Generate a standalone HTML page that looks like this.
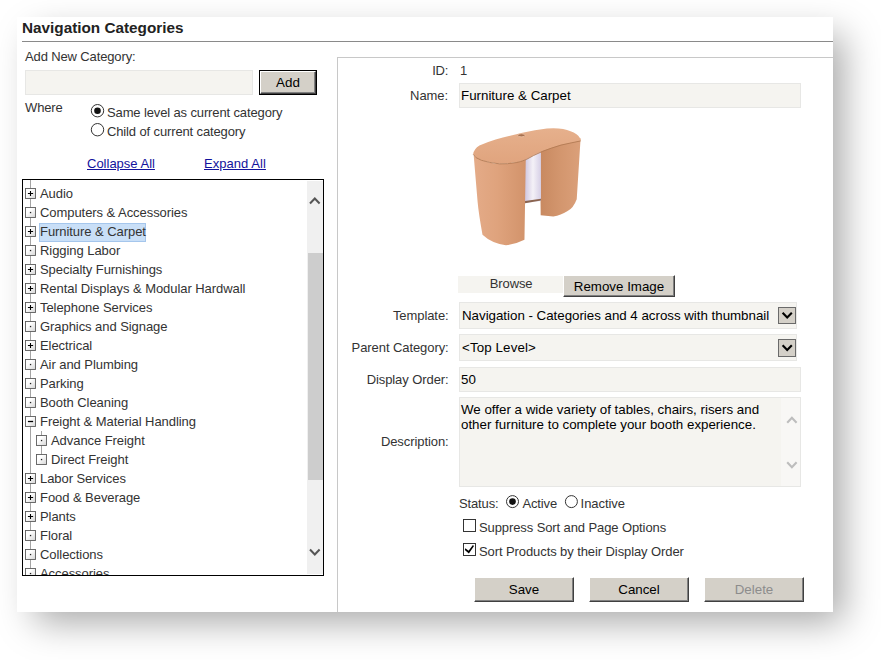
<!DOCTYPE html>
<html><head><meta charset="utf-8">
<style>
html,body{margin:0;padding:0;background:#fff;}
body{width:881px;height:660px;position:relative;overflow:hidden;font-family:"Liberation Sans",sans-serif;font-size:13px;color:#333;}
.abs{position:absolute;white-space:nowrap;box-sizing:border-box;}
#card{position:absolute;left:17px;top:16.5px;width:816px;height:595.5px;background:#fff;box-shadow:14px 14px 35px -4px rgba(0,0,0,0.35);}
#clip{position:absolute;left:0;top:0;width:833px;height:612px;overflow:hidden;}
.t{position:absolute;white-space:nowrap;line-height:16px;height:16px;letter-spacing:-0.13px;}
.lab{position:absolute;white-space:nowrap;line-height:16px;height:16px;font-size:13px;letter-spacing:-0.08px;text-align:right;width:120px;left:328.6px;}
.inp{position:absolute;box-sizing:border-box;background:#f5f4f0;border:1px solid #e7e7e5;color:#000;font-size:13.33px;}
.btn{position:absolute;box-sizing:border-box;background:#d4d0c8;border:1px solid;border-color:#fff #404040 #404040 #fff;box-shadow:inset -1px -1px 0 #808080;text-align:center;color:#000;font-size:13.33px;}
.v{position:absolute;white-space:nowrap;color:#000;font-size:13.33px;line-height:16px;height:16px;}
</style></head><body>
<div id="card"></div>
<div id="clip">
<div class="t" style="left:22px;top:19px;font-weight:bold;font-size:15.3px;color:#222;line-height:18px;height:18px;letter-spacing:0;">Navigation Categories</div>
<div class="abs" style="left:22px;top:41px;width:820px;height:1px;background:#8a8a8a;"></div>
<div class="t" style="left:25px;top:49px;">Add New Category:</div>
<div class="inp" style="left:25px;top:70px;width:228px;height:25px;"></div>
<div class="abs" style="left:259px;top:70px;width:58px;height:25px;background:#000;"></div>
<div class="btn" style="left:260px;top:71px;width:56px;height:23px;line-height:22px;font-size:13.4px;">Add</div>
<div class="t" style="left:25px;top:100px;">Where</div>
<div class="t" style="left:107px;top:105px;">Same level as current category</div>
<div class="t" style="left:107px;top:124px;">Child of current category</div>
<svg class="abs" style="left:90px;top:103px;" width="15" height="15" viewBox="0 0 15 15"><circle cx="7.5" cy="7.7" r="6.2" fill="#fff" stroke="#333" stroke-width="1"/><circle cx="7.5" cy="7.7" r="3.3" fill="#111"/></svg>
<svg class="abs" style="left:90px;top:122px;" width="15" height="15" viewBox="0 0 15 15"><circle cx="7.5" cy="7.7" r="6.2" fill="#fff" stroke="#333" stroke-width="1"/></svg>
<div class="t" style="left:87px;top:156px;color:#12129c;text-decoration:underline;letter-spacing:0;">Collapse All</div>
<div class="t" style="left:204px;top:156px;color:#12129c;text-decoration:underline;letter-spacing:0.05px;">Expand All</div>

<svg width="0" height="0" style="position:absolute"><defs><linearGradient id="ig" x1="0" y1="0" x2="1" y2="1"><stop offset="0.35" stop-color="#fff"/><stop offset="1" stop-color="#d4d4d4"/></linearGradient></defs></svg>
<!-- tree -->
<div class="abs" style="left:22px;top:179px;width:302px;height:397px;border:1px solid #000;background:#fff;"></div>
<div class="abs" style="left:0;top:180px;width:323px;height:395px;overflow:hidden;">
<div class="abs" style="left:0;top:-180px;width:323px;height:600px;">
<div class="abs" style="left:30px;top:180px;width:1px;height:400px;background:#a4a4a4;"></div>
<div class="abs" style="left:41px;top:431px;width:1px;height:29px;background:#a4a4a4;"></div>
<svg class="abs" style="left:25px;top:188px" width="11" height="11" viewBox="0 0 11 11"><rect x="0.5" y="0.5" width="10" height="10" fill="url(#ig)" stroke="#5c5c5c" stroke-width="0.9"/><path d="M2.9 5.5H8.1M5.5 2.9V8.1" stroke="#000" stroke-width="1.1"/></svg>
<div class="t tr" style="letter-spacing:-0.06px;left:40px;top:186px;">Audio</div>
<svg class="abs" style="left:25px;top:207px" width="11" height="11" viewBox="0 0 11 11"><rect x="0.5" y="0.5" width="10" height="10" fill="url(#ig)" stroke="#5c5c5c" stroke-width="0.9"/><rect x="4.9" y="4.9" width="1.3" height="1.3" fill="#222"/></svg>
<div class="t tr" style="letter-spacing:-0.06px;left:40px;top:205px;">Computers &amp; Accessories</div>
<svg class="abs" style="left:25px;top:226px" width="11" height="11" viewBox="0 0 11 11"><rect x="0.5" y="0.5" width="10" height="10" fill="url(#ig)" stroke="#5c5c5c" stroke-width="0.9"/><path d="M2.9 5.5H8.1M5.5 2.9V8.1" stroke="#000" stroke-width="1.1"/></svg>
<div class="abs" style="left:39px;top:223px;width:107px;height:19px;background:#c9dff7;border:1px solid #a5c6ec;"></div>
<div class="t tr" style="letter-spacing:-0.06px;left:40px;top:224px;">Furniture &amp; Carpet</div>
<svg class="abs" style="left:25px;top:245px" width="11" height="11" viewBox="0 0 11 11"><rect x="0.5" y="0.5" width="10" height="10" fill="url(#ig)" stroke="#5c5c5c" stroke-width="0.9"/><rect x="4.9" y="4.9" width="1.3" height="1.3" fill="#222"/></svg>
<div class="t tr" style="letter-spacing:-0.06px;left:40px;top:243px;">Rigging Labor</div>
<svg class="abs" style="left:25px;top:264px" width="11" height="11" viewBox="0 0 11 11"><rect x="0.5" y="0.5" width="10" height="10" fill="url(#ig)" stroke="#5c5c5c" stroke-width="0.9"/><path d="M2.9 5.5H8.1M5.5 2.9V8.1" stroke="#000" stroke-width="1.1"/></svg>
<div class="t tr" style="letter-spacing:-0.06px;left:40px;top:262px;">Specialty Furnishings</div>
<svg class="abs" style="left:25px;top:283px" width="11" height="11" viewBox="0 0 11 11"><rect x="0.5" y="0.5" width="10" height="10" fill="url(#ig)" stroke="#5c5c5c" stroke-width="0.9"/><path d="M2.9 5.5H8.1M5.5 2.9V8.1" stroke="#000" stroke-width="1.1"/></svg>
<div class="t tr" style="letter-spacing:-0.06px;left:40px;top:281px;">Rental Displays &amp; Modular Hardwall</div>
<svg class="abs" style="left:25px;top:302px" width="11" height="11" viewBox="0 0 11 11"><rect x="0.5" y="0.5" width="10" height="10" fill="url(#ig)" stroke="#5c5c5c" stroke-width="0.9"/><path d="M2.9 5.5H8.1M5.5 2.9V8.1" stroke="#000" stroke-width="1.1"/></svg>
<div class="t tr" style="letter-spacing:-0.06px;left:40px;top:300px;">Telephone Services</div>
<svg class="abs" style="left:25px;top:321px" width="11" height="11" viewBox="0 0 11 11"><rect x="0.5" y="0.5" width="10" height="10" fill="url(#ig)" stroke="#5c5c5c" stroke-width="0.9"/><rect x="4.9" y="4.9" width="1.3" height="1.3" fill="#222"/></svg>
<div class="t tr" style="letter-spacing:-0.06px;left:40px;top:319px;">Graphics and Signage</div>
<svg class="abs" style="left:25px;top:340px" width="11" height="11" viewBox="0 0 11 11"><rect x="0.5" y="0.5" width="10" height="10" fill="url(#ig)" stroke="#5c5c5c" stroke-width="0.9"/><path d="M2.9 5.5H8.1M5.5 2.9V8.1" stroke="#000" stroke-width="1.1"/></svg>
<div class="t tr" style="letter-spacing:-0.06px;left:40px;top:338px;">Electrical</div>
<svg class="abs" style="left:25px;top:359px" width="11" height="11" viewBox="0 0 11 11"><rect x="0.5" y="0.5" width="10" height="10" fill="url(#ig)" stroke="#5c5c5c" stroke-width="0.9"/><rect x="4.9" y="4.9" width="1.3" height="1.3" fill="#222"/></svg>
<div class="t tr" style="letter-spacing:-0.06px;left:40px;top:357px;">Air and Plumbing</div>
<svg class="abs" style="left:25px;top:378px" width="11" height="11" viewBox="0 0 11 11"><rect x="0.5" y="0.5" width="10" height="10" fill="url(#ig)" stroke="#5c5c5c" stroke-width="0.9"/><rect x="4.9" y="4.9" width="1.3" height="1.3" fill="#222"/></svg>
<div class="t tr" style="letter-spacing:-0.06px;left:40px;top:376px;">Parking</div>
<svg class="abs" style="left:25px;top:397px" width="11" height="11" viewBox="0 0 11 11"><rect x="0.5" y="0.5" width="10" height="10" fill="url(#ig)" stroke="#5c5c5c" stroke-width="0.9"/><rect x="4.9" y="4.9" width="1.3" height="1.3" fill="#222"/></svg>
<div class="t tr" style="letter-spacing:-0.06px;left:40px;top:395px;">Booth Cleaning</div>
<svg class="abs" style="left:25px;top:416px" width="11" height="11" viewBox="0 0 11 11"><rect x="0.5" y="0.5" width="10" height="10" fill="url(#ig)" stroke="#5c5c5c" stroke-width="0.9"/><path d="M2.9 5.5H8.1" stroke="#000" stroke-width="1.3"/></svg>
<div class="t tr" style="letter-spacing:-0.06px;left:40px;top:414px;">Freight &amp; Material Handling</div>
<svg class="abs" style="left:36px;top:435px" width="11" height="11" viewBox="0 0 11 11"><rect x="0.5" y="0.5" width="10" height="10" fill="url(#ig)" stroke="#5c5c5c" stroke-width="0.9"/><rect x="4.9" y="4.9" width="1.3" height="1.3" fill="#222"/></svg>
<div class="t tr" style="letter-spacing:-0.06px;left:51px;top:433px;">Advance Freight</div>
<svg class="abs" style="left:36px;top:454px" width="11" height="11" viewBox="0 0 11 11"><rect x="0.5" y="0.5" width="10" height="10" fill="url(#ig)" stroke="#5c5c5c" stroke-width="0.9"/><rect x="4.9" y="4.9" width="1.3" height="1.3" fill="#222"/></svg>
<div class="t tr" style="letter-spacing:-0.06px;left:51px;top:452px;">Direct Freight</div>
<svg class="abs" style="left:25px;top:473px" width="11" height="11" viewBox="0 0 11 11"><rect x="0.5" y="0.5" width="10" height="10" fill="url(#ig)" stroke="#5c5c5c" stroke-width="0.9"/><path d="M2.9 5.5H8.1M5.5 2.9V8.1" stroke="#000" stroke-width="1.1"/></svg>
<div class="t tr" style="letter-spacing:-0.06px;left:40px;top:471px;">Labor Services</div>
<svg class="abs" style="left:25px;top:492px" width="11" height="11" viewBox="0 0 11 11"><rect x="0.5" y="0.5" width="10" height="10" fill="url(#ig)" stroke="#5c5c5c" stroke-width="0.9"/><path d="M2.9 5.5H8.1M5.5 2.9V8.1" stroke="#000" stroke-width="1.1"/></svg>
<div class="t tr" style="letter-spacing:-0.06px;left:40px;top:490px;">Food &amp; Beverage</div>
<svg class="abs" style="left:25px;top:511px" width="11" height="11" viewBox="0 0 11 11"><rect x="0.5" y="0.5" width="10" height="10" fill="url(#ig)" stroke="#5c5c5c" stroke-width="0.9"/><path d="M2.9 5.5H8.1M5.5 2.9V8.1" stroke="#000" stroke-width="1.1"/></svg>
<div class="t tr" style="letter-spacing:-0.06px;left:40px;top:509px;">Plants</div>
<svg class="abs" style="left:25px;top:530px" width="11" height="11" viewBox="0 0 11 11"><rect x="0.5" y="0.5" width="10" height="10" fill="url(#ig)" stroke="#5c5c5c" stroke-width="0.9"/><rect x="4.9" y="4.9" width="1.3" height="1.3" fill="#222"/></svg>
<div class="t tr" style="letter-spacing:-0.06px;left:40px;top:528px;">Floral</div>
<svg class="abs" style="left:25px;top:549px" width="11" height="11" viewBox="0 0 11 11"><rect x="0.5" y="0.5" width="10" height="10" fill="url(#ig)" stroke="#5c5c5c" stroke-width="0.9"/><rect x="4.9" y="4.9" width="1.3" height="1.3" fill="#222"/></svg>
<div class="t tr" style="letter-spacing:-0.06px;left:40px;top:547px;">Collections</div>
<svg class="abs" style="left:25px;top:568px" width="11" height="11" viewBox="0 0 11 11"><rect x="0.5" y="0.5" width="10" height="10" fill="url(#ig)" stroke="#5c5c5c" stroke-width="0.9"/><rect x="4.9" y="4.9" width="1.3" height="1.3" fill="#222"/></svg>
<div class="t tr" style="letter-spacing:-0.06px;left:40px;top:566px;">Accessories</div>
</div></div>
<!-- scrollbar -->
<div class="abs" style="left:307px;top:181px;width:16px;height:393px;background:#f0f0f0;"></div>
<div class="abs" style="left:308px;top:253px;width:15px;height:227px;background:#cdcdcd;"></div>
<svg class="abs" style="left:307px;top:181px" width="16" height="40" viewBox="0 0 16 40"><path d="M3 22.5L7.8 17.5L12.6 22.5" fill="none" stroke="#555" stroke-width="2"/></svg>
<svg class="abs" style="left:307px;top:534px" width="16" height="40" viewBox="0 0 16 40"><path d="M3 15.5L7.8 20.5L12.6 15.5" fill="none" stroke="#555" stroke-width="2"/></svg>

<!-- right panel -->
<div class="abs" style="left:337px;top:57px;width:520px;height:600px;border:1px solid #c8c8c8;"></div>
<div class="lab" style="top:62.8px;left:328px;letter-spacing:-0.25px">ID:</div>
<div class="v" style="left:460px;top:63px;font-size:13px;color:#333">1</div>
<div class="lab" style="top:88px;left:328px;">Name:</div>
<div class="inp" style="left:459px;top:83px;width:342px;height:25px;"></div>
<div class="v" style="left:461px;top:87.6px;">Furniture &amp; Carpet</div>

<div class="abs" style="left:458px;top:276px;width:105px;height:17px;background:#f5f4f0;"></div>
<div class="t" style="left:458.6px;top:275.6px;width:105px;text-align:center;">Browse</div>
<div class="btn" style="left:563px;top:275px;width:112px;height:22px;line-height:21px;">Remove Image</div>

<div class="lab" style="top:308px;">Template:</div>
<div class="inp" style="left:459px;top:302px;width:338px;height:27px;"></div>
<div class="v" style="left:462px;top:307.6px;letter-spacing:-0.02px">Navigation - Categories and 4 across with thumbnail</div>
<div class="lab" style="top:339.7px;">Parent Category:</div>
<div class="inp" style="left:459px;top:334px;width:338px;height:27px;"></div>
<div class="v" style="left:462px;top:339.6px;letter-spacing:0.12px">&lt;Top Level&gt;</div>
<div class="lab" style="top:371.5px;">Display Order:</div>
<div class="inp" style="left:459px;top:367px;width:342px;height:25px;"></div>
<div class="v" style="left:461px;top:372px;">50</div>
<div class="lab" style="top:434px;">Description:</div>
<div class="inp" style="left:459px;top:397px;width:342px;height:90px;"></div>
<div class="v" style="left:461px;top:402px;line-height:15px;height:auto;white-space:normal;width:320px;">We offer a wide variety of tables, chairs, risers and<br>other furniture to complete your booth experience.</div>


<!-- select arrows -->
<svg class="abs" style="left:778px;top:307px" width="18" height="17" viewBox="0 0 18 17"><rect x="0.5" y="0.5" width="17" height="16" fill="#d4d0c8" stroke="#6a6a6a"/><path d="M4.6 5.8L9.2 10.6L13.8 5.8" fill="none" stroke="#000" stroke-width="2.1"/></svg>
<svg class="abs" style="left:778px;top:339px" width="18" height="18" viewBox="0 0 18 18"><rect x="0.5" y="0.5" width="17" height="17" fill="#d4d0c8" stroke="#6a6a6a"/><path d="M4.6 6.3L9.2 11.1L13.8 6.3" fill="none" stroke="#000" stroke-width="2.1"/></svg>
<!-- textarea scrollbar -->
<div class="abs" style="left:781px;top:398px;width:19px;height:88px;background:#f8f7f5;"></div>
<svg class="abs" style="left:781px;top:398px" width="19" height="88" viewBox="0 0 19 88"><path d="M6.2 24.8L10.9 19.8L15.6 24.8" fill="none" stroke="#bdbdbd" stroke-width="2.1"/><path d="M6.2 64.2L10.9 69.2L15.6 64.2" fill="none" stroke="#bdbdbd" stroke-width="2.1"/></svg>
<!-- radios / checkboxes -->
<svg class="abs" style="left:505px;top:494px;" width="15" height="15" viewBox="0 0 15 15"><circle cx="7.5" cy="7.6" r="6" fill="#fff" stroke="#333" stroke-width="1"/><circle cx="7.5" cy="7.6" r="3.3" fill="#111"/></svg>
<svg class="abs" style="left:564px;top:494px;" width="15" height="15" viewBox="0 0 15 15"><circle cx="7.4" cy="7.6" r="6" fill="#fff" stroke="#333" stroke-width="1"/></svg>
<svg class="abs" style="left:463px;top:519px;" width="13" height="13" viewBox="0 0 13 13"><rect x="0.5" y="0.5" width="12" height="12" fill="#fff" stroke="#2a2a2a" stroke-width="0.95"/></svg>
<svg class="abs" style="left:463px;top:543px;" width="13" height="13" viewBox="0 0 13 13"><rect x="0.5" y="0.5" width="12" height="12" fill="#fff" stroke="#2a2a2a" stroke-width="0.95"/><path d="M2.3 5.3L5.6 7.7L9.9 2L11 2.9L5.9 10.5L1.8 7.1Z" fill="#000"/></svg>
<!-- product image -->
<svg class="abs" style="left:440px;top:100px" width="180" height="170" viewBox="0 0 699 660">
<defs>
<linearGradient id="g1" x1="0" x2="1" y1="0" y2="0"><stop offset="0" stop-color="#e4ab88"/><stop offset="0.45" stop-color="#dfa37d"/><stop offset="1" stop-color="#d2936b"/></linearGradient>
<linearGradient id="g2" x1="0" x2="1" y1="0" y2="0"><stop offset="0" stop-color="#c88960"/><stop offset="0.5" stop-color="#d3966e"/><stop offset="1" stop-color="#dba07a"/></linearGradient>
<linearGradient id="g3" x1="0" x2="1" y1="0" y2="0"><stop offset="0" stop-color="#cfc6e0"/><stop offset="0.5" stop-color="#f4f1f7"/><stop offset="1" stop-color="#d6cfe6"/></linearGradient>
<linearGradient id="g4" x1="0" x2="0" y1="0" y2="1"><stop offset="0" stop-color="#e6b08c"/><stop offset="1" stop-color="#e0a47e"/></linearGradient>
</defs>
<!-- back/right leg -->
<path d="M388 185 L546 148 L531 385 Q518 420 494 432 Q470 448 440 452 L391 447 Z" fill="url(#g2)"/>
<!-- inner panel -->
<path d="M330 225 L392 195 L392 392 L330 400 Z" fill="url(#g3)"/>
<path d="M330 392 L392 383 L392 390 L330 401 Z" fill="#8a6450"/>
<!-- left/front leg -->
<path d="M131 216 Q180 248 240 248 Q290 246 333 232 L328 543 Q295 560 256 564 Q200 556 165 523 Q150 440 146 395 Z" fill="url(#g1)"/>
<!-- top -->
<path d="M129 210 Q132 190 153 177 Q185 162 216 153 Q270 138 320 127 Q370 116 415 111 Q450 108 478 113 Q510 120 530 133 Q546 145 546 158 Q510 165 470 174 Q430 186 399 198 Q360 215 335 230 Q310 240 296 242 Q260 248 232 247 Q190 243 161 233 Q135 224 129 210 Z" fill="url(#g4)"/>
<path d="M129 211 Q135 225 161 234 Q190 244 232 248 Q260 249 296 243 Q310 241 335 231 Q360 216 399 199 Q430 187 470 175 Q510 166 546 159" fill="none" stroke="#b27a54" stroke-width="3.5"/>
<ellipse cx="316" cy="137" rx="14" ry="6" fill="#a8714f" stroke="#eec6aa" stroke-width="3"/>
</svg>
<div class="t" style="left:459px;top:496px;">Status:</div>
<div class="t" style="left:522.4px;top:496px;">Active</div>
<div class="t" style="left:580.6px;top:496px;letter-spacing:-0.05px">Inactive</div>
<div class="t" style="left:479px;top:519.7px;letter-spacing:-0.1px">Suppress Sort and Page Options</div>
<div class="t" style="left:479px;top:543.6px;letter-spacing:-0.09px">Sort Products by their Display Order</div>

<div class="btn" style="left:474px;top:577px;width:100px;height:25px;line-height:23.4px;">Save</div>
<div class="btn" style="left:589px;top:577px;width:100px;height:25px;line-height:23.4px;">Cancel</div>
<div class="btn" style="left:704px;top:577px;width:100px;height:25px;line-height:23.4px;color:#8c8c8c;">Delete</div>
</div>
</body></html>
